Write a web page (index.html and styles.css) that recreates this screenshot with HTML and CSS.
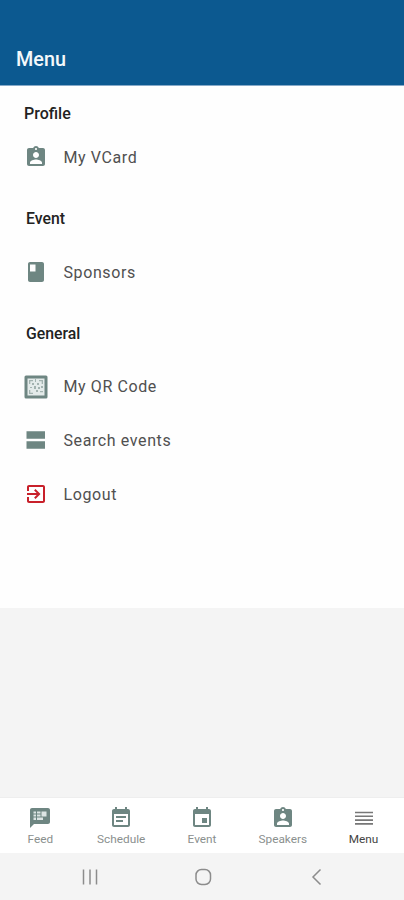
FILE: index.html
```html
<!DOCTYPE html>
<html>
	<head>
		<meta charset="utf-8" />
		<title>Menu</title>
		<meta name="viewport" content="width=device-width, initial-scale=1.0" />
		<link rel="stylesheet" href="styles.css">
	</head>
	<body>
		<div class="app">
			<div class="header">Menu</div>
			<div class="content">
				<div class="heading profile">Profile</div>
				<div class="item">
					<svg class="icon" viewBox="0 0 24 24"><path d="M19 3h-4.180C14.400 1.840 13.300 1 12 1s-2.400.840-2.820 2H5c-1.100 0-2 .900-2 2v14c0 1.100.900 2 2 2h14c1.100 0 2-.900 2-2V5c0-1.100-.900-2-2-2zm-7 0c.550 0 1 .450 1 1s-.450 1-1 1-1-.450-1-1 .450-1 1-1zm0 4c1.660 0 3 1.340 3 3s-1.340 3-3 3-3-1.340-3-3 1.340-3 3-3zm6 12H6v-1.400c0-2 4-3.100 6-3.100s6 1.100 6 3.100V19z"/></svg>
					<span>My VCard</span>
				</div>
				<div class="heading">Event</div>
				<div class="item">
					<svg class="icon" viewBox="0 0 24 24"><path fill-rule="evenodd" d="M6 2h12c1.100 0 2 .900 2 2v16c0 1.100-.900 2-2 2H6c-1.100 0-2-.900-2-2V4c0-1.100.900-2 2-2zm0 2.500v7h5.500v-7z"/></svg>
					<span>Sponsors</span>
				</div>
				<div class="heading">General</div>
				<div class="item">
					<svg class="icon" viewBox="0 0 24 24">
						<rect x="0.500" y="0.500" width="23" height="23" rx="1.500"/>
						<path fill="#E4EBEA" d="M3.500 3.500h17v17h-17z"/>
						<path fill="#A3B3B0" d="M5 5h4v1.300H6.300V9H5zM15 5h4v4h-1.300V6.300H15zM5 15h1.300v2.700H9V19H5zM8 8h2v2H8zM13 8h2v2h-2zM10 11h2v3h-2zM14 12h2v2h-2zM12 15h2v2h-2zM16 16h3v1.300h-3zM6 12h2v1H6zM11 4h1v3h-1zM17 11h2v2h-2z"/>
					</svg>
					<span>My QR Code</span>
				</div>
				<div class="item">
					<svg class="icon" viewBox="0 0 24 24"><path d="M2.500 3.300h18.500v7.500H2.500zM2.500 13.200h18.500v7.500H2.500z"/></svg>
					<span>Search events</span>
				</div>
				<div class="item">
					<svg class="icon logout-icon" viewBox="0 0 24 24"><path d="M10.090 15.590L11.500 17l5-5-5-5-1.410 1.410L12.670 11H3v2h9.670l-2.580 2.590zM19 3H5c-1.110 0-2 .900-2 2v4h2V5h14v14H5v-4H3v4c0 1.100.890 2 2 2h14c1.100 0 2-.900 2-2V5c0-1.100-.900-2-2-2z"/></svg>
					<span>Logout</span>
				</div>
			</div>
			<div class="tabs">
				<div class="tab">
					<svg class="icon" viewBox="0 0 24 24"><path d="M20 2H4c-1.100 0-1.990.900-1.990 2L2 22l4-4h14c1.100 0 2-.900 2-2V4c0-1.100-.900-2-2-2z"/><path fill="#DCE5E4" d="M5.500 5.500h2.500v2H5.500zM5.500 8.500h2.500v2H5.500zM5.500 11.500h2.500v2.500H5.500zM9 5.500h3.500v2H9zM9 8.500h3.500v2H9zM9 11.500h6v2.500H9zM13.500 5.500h5v5h-5z"/></svg>
					<span>Feed</span>
				</div>
				<div class="tab">
					<svg class="icon" viewBox="0 0 24 24"><path d="M17 10H7v2h10v-2zm2-7h-1V1h-2v2H8V1H6v2H5c-1.110 0-1.990.900-1.990 2L3 19c0 1.100.890 2 2 2h14c1.100 0 2-.900 2-2V5c0-1.100-.900-2-2-2zm0 16H5V8h14v11zm-5-5H7v2h7v-2z"/></svg>
					<span>Schedule</span>
				</div>
				<div class="tab">
					<svg class="icon" viewBox="0 0 24 24"><path d="M17 12h-5v5h5v-5zM16 1v2H8V1H6v2H5c-1.110 0-1.990.900-1.990 2L3 19c0 1.100.890 2 2 2h14c1.100 0 2-.900 2-2V5c0-1.100-.900-2-2-2h-1V1h-2zm3 18H5V8h14v11z"/></svg>
					<span>Event</span>
				</div>
				<div class="tab">
					<svg class="icon" viewBox="0 0 24 24"><path d="M19 3h-4.180C14.400 1.840 13.300 1 12 1s-2.400.840-2.820 2H5c-1.100 0-2 .900-2 2v14c0 1.100.900 2 2 2h14c1.100 0 2-.900 2-2V5c0-1.100-.900-2-2-2zm-7 0c.550 0 1 .450 1 1s-.450 1-1 1-1-.450-1-1 .450-1 1-1zm0 4c1.660 0 3 1.340 3 3s-1.340 3-3 3-3-1.340-3-3 1.340-3 3-3zm6 12H6v-1.400c0-2 4-3.100 6-3.100s6 1.100 6 3.100V19z"/></svg>
					<span>Speakers</span>
				</div>
				<div class="tab active">
					<svg class="icon" viewBox="0 0 24 24"><path d="M3 5.700h18v1.600H3zM3 9.500h18v1.600H3zM3 13.300h18v1.600H3zM3 17.100h18v1.600H3z"/></svg>
					<span>Menu</span>
				</div>
			</div>
			<div class="system">
				<svg class="keys" viewBox="0 0 404 47">
					<path d="M83.500 16.500v15M90 16.500v15M96.500 16.500v15"/>
					<rect x="196" y="16.500" width="14.500" height="15" rx="5.500"/>
					<path d="M320.500 16.500l-7.500 7.500 7.500 7.500"/>
				</svg>
			</div>
		</div>
	</body>
</html>
```

FILE: styles.css
```css
html,body
{
	height: 100%;
	margin: 0;
	padding: 0;
}

body
{
	background-color: #F4F4F4;
	font-family: Roboto,sans-serif;
}

.app
{
	display: flex;
	flex-direction: column;
	height: 900px;
	width: 404px;
}

.header
{
	background-color: #0C5990;
	border-bottom: 1px solid #86A9C8;
	box-sizing: border-box;
	color: #F4F8FB;
	font-size: 19.8px;
	font-weight: 500;
	height: 86px;
	line-height: 24px;
	padding: 48px 16px 0;
}

.content
{
	background-color: #FEFEFE;
	box-sizing: border-box;
	height: 522px;
	padding-top: 1px;
}

.heading
{
	box-sizing: border-box;
	color: #222;
	font-size: 15.8px;
	font-weight: 500;
	height: 61px;
	line-height: 20px;
	padding: 25px 26px 0;
}

.profile
{
	font-size: 16px;
	height: 43.500px;
	padding: 17px 24px 0;
}

.item
{
	align-items: center;
	color: #505050;
	display: flex;
	font-size: 16px;
	gap: 15.5px;
	height: 53.7px;
	letter-spacing: 0.6px;
	line-height: 20px;
	padding-left: 24px;
}

.item span
{
	padding-top: 1px;
}

.icon
{
	fill: #6E8682;
	flex: none;
	height: 24px;
	width: 24px;
}

.logout-icon
{
	fill: #C8202A;
}

.tabs
{
	background-color: #FFF;
	border-top: 1px solid #EEE;
	box-sizing: border-box;
	display: flex;
	height: 56px;
	margin-top: auto;
}

.tab
{
	align-items: center;
	color: #8A8F8E;
	display: flex;
	flex: 1;
	flex-direction: column;
	font-size: 11.8px;
	line-height: 16px;
	padding-top: 8px;
}

.tab .icon
{
	margin-bottom: 1px;
}

.active
{
	color: #444;
}

.active .icon
{
	fill: #777;
}

.system
{
	background-color: #F4F4F4;
	height: 47px;
}

.keys
{
	display: block;
	fill: none;
	height: 47px;
	stroke: #8C8C8C;
	stroke-width: 1.5;
	width: 404px;
}
```
